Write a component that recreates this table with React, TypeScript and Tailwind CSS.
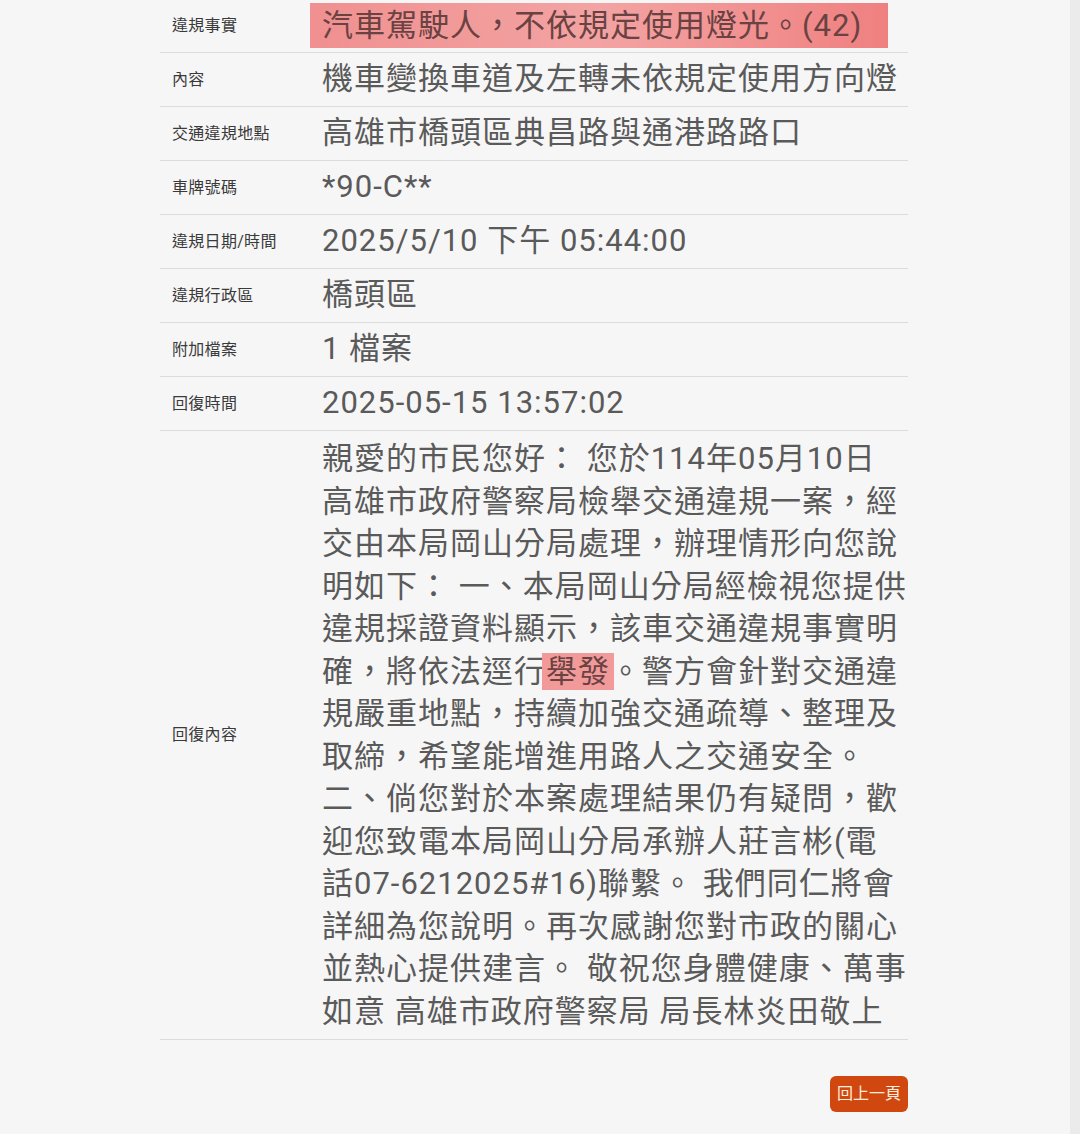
const rows: { label: string; value: string }[] = [
  { label: "內容", value: "機車變換車道及左轉未依規定使用方向燈" },
  { label: "交通違規地點", value: "高雄市橋頭區典昌路與通港路路口" },
  { label: "車牌號碼", value: "*90-C**" },
  { label: "違規日期/時間", value: "2025/5/10 下午 05:44:00" },
  { label: "違規行政區", value: "橋頭區" },
  { label: "附加檔案", value: "1 檔案" },
  { label: "回復時間", value: "2025-05-15 13:57:02" },
];

const replyLines: React.ReactNode[] = [
  "親愛的市民您好： 您於114年05月10日",
  "高雄市政府警察局檢舉交通違規一案，經",
  "交由本局岡山分局處理，辦理情形向您說",
  "明如下： 一、本局岡山分局經檢視您提供",
  "違規採證資料顯示，該車交通違規事實明",
  <>
    確，將依法逕行
    <span className="-mx-1 bg-[#f29a9a] px-1 text-[#6a4242]">舉發</span>
    。警方會針對交通違
  </>,
  "規嚴重地點，持續加強交通疏導、整理及",
  "取締，希望能增進用路人之交通安全。",
  "二、倘您對於本案處理結果仍有疑問，歡",
  "迎您致電本局岡山分局承辦人莊言彬(電",
  "話07-6212025#16)聯繫。 我們同仁將會",
  "詳細為您說明。再次感謝您對市政的關心",
  "並熱心提供建言。 敬祝您身體健康、萬事",
  "如意 高雄市政府警察局 局長林炎田敬上",
];

function Label({ children }: { children: React.ReactNode }) {
  return (
    <div className="flex items-center border-b border-[#dcdcdc] pl-3 text-[16px] tracking-[0.3px] text-[#3a3a3a]">
      {children}
    </div>
  );
}

export default function App() {
  return (
    <div
      className="flex min-h-[1134px] w-full bg-[#f6f6f6]"
      style={{ fontFamily: 'Roboto, "Noto Sans CJK TC", sans-serif' }}
    >
      <div className="flex-1 pl-[160px]">
        <div className="-mt-[1px] grid w-[748px] grid-cols-[150px_598px]">
          <Label>違規事實</Label>
          <div className="flex h-[54px] items-center border-b border-[#dcdcdc]">
            <span className="flex h-[45px] items-center bg-gradient-to-r from-[#f09090] via-[#f3a3a3] to-[#ef8080] pl-3 pr-[26px] text-[31px] leading-none tracking-[1px] text-[#6a4242]">
              汽車駕駛人，不依規定使用燈光。(42)
            </span>
          </div>
          {rows.map((r) => (
            <>
              <Label key={r.label + "l"}>{r.label}</Label>
              <div
                key={r.label + "v"}
                className="flex h-[54px] items-center whitespace-nowrap border-b border-[#dcdcdc] pl-3 text-[31px] tracking-[1px] text-[#5a5a5a]"
              >
                {r.value}
              </div>
            </>
          ))}
          <Label>回復內容</Label>
          <div className="border-b border-[#dcdcdc] pb-[6px] pl-3 pt-[7px] text-[31px] leading-[42.5px] tracking-[1px] text-[#5a5a5a]">
            {replyLines.map((line, i) => (
              <div key={i} className="whitespace-nowrap">
                {line}
              </div>
            ))}
          </div>
        </div>
        <div className="flex w-[748px] justify-end pt-[36px]">
          <button className="h-[36px] rounded-md bg-[#d0480f] px-[7px] text-[16px] text-[#ffeedd]">
            回上一頁
          </button>
        </div>
      </div>
      <div className="w-[10px] bg-[#ebebeb]" />
    </div>
  );
}
